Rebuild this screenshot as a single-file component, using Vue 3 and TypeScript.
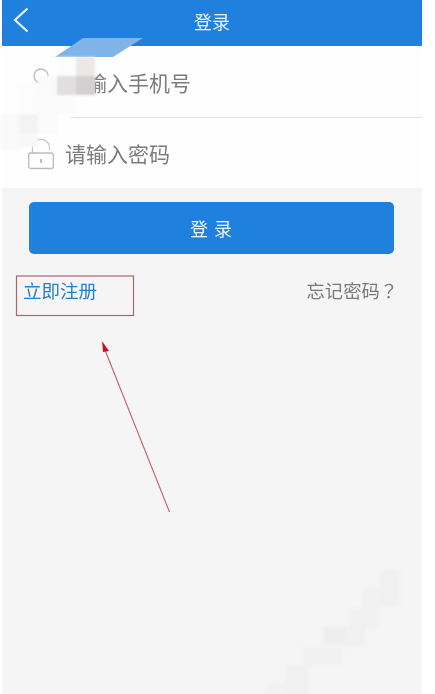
<script setup lang="ts">
interface Cell { x: number; y: number; w: number; h: number; fill: string }
const topCells: Cell[] = [
  { x: 38, y: 76, w: 19, h: 19, fill: '#fafafa' },
  { x: 19, y: 85, w: 19, h: 28, fill: '#fcfcfc' },
  { x: 38, y: 95, w: 38, h: 19, fill: '#fbfbfb' },
  { x: 0, y: 114, w: 19, h: 36, fill: '#f9f9f9' },
  { x: 19, y: 114, w: 19, h: 19, fill: '#f3f3f3' },
  { x: 19, y: 133, w: 19, h: 14, fill: '#f8f8f8' },
  { x: 38, y: 114, w: 19, h: 19, fill: '#fbfbfb' },
  { x: 57, y: 57, w: 19, h: 19, fill: '#fcfcfc' },
  { x: 76, y: 57, w: 19, h: 19, fill: '#ebe8e8' },
  { x: 57, y: 76, w: 19, h: 19, fill: '#e0dede' },
  { x: 76, y: 76, w: 19, h: 19, fill: '#d2d0d0' }
]
const bottomCells: Cell[] = [
  { x: 380, y: 570, w: 20, h: 36, fill: '#f0f0f0' },
  { x: 362, y: 588, w: 20, h: 20, fill: '#f1f1f1' },
  { x: 349, y: 608, w: 30, h: 20, fill: '#f1f1f1' },
  { x: 343, y: 625, w: 22, h: 22, fill: '#f0f0f0' },
  { x: 323, y: 627, w: 22, h: 18, fill: '#eeeeee' },
  { x: 303, y: 646, w: 40, h: 20, fill: '#f1f1f1' },
  { x: 286, y: 665, w: 22, h: 29, fill: '#f0f0f0' },
  { x: 266, y: 684, w: 20, h: 10, fill: '#f1f1f1' }
]
</script>

<template>
  <div class="page">
    <div class="screen">
      <header class="nav">
        <svg class="back" viewBox="0 0 16 26" width="16" height="26" aria-hidden="true">
          <path d="M14.5 1.5 L2 13 L14.5 24.5" fill="none" stroke="#e6f2fc" stroke-width="2.2" />
        </svg>
        <span class="nav-title">登录</span>
      </header>

      <section class="form">
        <div class="row row-first">
          <svg class="row-icon" viewBox="0 0 26 32" width="26" height="32" aria-hidden="true">
            <circle cx="13" cy="9" r="7" fill="none" stroke="#bcbcbc" stroke-width="1.3" />
            <path d="M1 31 C2 21 24 21 25 31 Z" fill="none" stroke="#bcbcbc" stroke-width="1.3" />
          </svg>
          <span class="placeholder">请输入手机号</span>
        </div>
        <div class="row">
          <svg class="row-icon" viewBox="0 0 26 32" width="26" height="32" aria-hidden="true">
            <path d="M4.5 15 V10 C4.5 -1.5 21.5 -1.5 21.5 10 V12" fill="none" stroke="#c4c4c4" stroke-width="1.2" />
            <rect x="0.7" y="15" width="24.6" height="15.5" rx="2" fill="none" stroke="#bcbcbc" stroke-width="1.3" />
            <rect x="12.2" y="21" width="1.6" height="4" fill="#b0b0b0" />
          </svg>
          <span class="placeholder">请输入密码</span>
        </div>
      </section>

      <button class="login" type="button">登 录</button>

      <div class="links">
        <a class="register">立即注册</a>
        <a class="forgot">忘记密码？</a>
      </div>
    </div>

    <svg class="overlay" viewBox="0 0 435 694" width="435" height="694" aria-hidden="true">
      <polygon points="55,57 83,38 143,38 113,57" fill="#80b4e9" />
      <g class="mosaic-top">
        <rect v-for="(c, i) in topCells" :key="'t' + i" :x="c.x" :y="c.y" :width="c.w" :height="c.h" :fill="c.fill" />
      </g>
      <g class="mosaic-bottom">
        <rect v-for="(c, i) in bottomCells" :key="'b' + i" :x="c.x" :y="c.y" :width="c.w" :height="c.h" :fill="c.fill" />
      </g>
      <rect x="16.5" y="276" width="117" height="39.5" fill="none" stroke="#a8656b" stroke-width="1.2" />
      <line x1="169.5" y1="512" x2="105" y2="350" stroke="#c0606c" stroke-width="1.1" />
      <polygon points="102,341 109,351 103,352" fill="#d01025" />
    </svg>
  </div>
</template>

<style>
html, body { margin: 0; background: #ffffff; }
</style>

<style scoped>
.page {
  position: relative;
  width: 435px;
  height: 694px;
  overflow: hidden;
  box-sizing: border-box;
  padding: 0 13px 0 2px;
  background: #ffffff;
  font-family: "Noto Sans CJK SC", "Noto Sans", sans-serif;
}
.screen {
  display: flex;
  flex-direction: column;
  height: 100%;
  background: #f6f5f5;
  filter: blur(0.35px);
}
.nav {
  position: relative;
  flex: none;
  height: 46px;
  display: flex;
  justify-content: center;
  background: #1f80dd;
}
.back {
  position: absolute;
  left: 11px;
  top: 7px;
}
.nav-title {
  color: #e9f3fc;
  font-size: 18px;
  line-height: 42px;
}
.form {
  flex: none;
  background: #fefefe;
  height: 142px;
  display: flex;
  flex-direction: column;
}
.row {
  flex: 1;
  display: flex;
  align-items: center;
  gap: 11px;
  padding-left: 26px;
}
.row-first {
  flex: none;
  height: 72px;
  position: relative;
}
.row-first::after {
  content: "";
  position: absolute;
  left: 68px;
  right: 0;
  bottom: 0;
  height: 1px;
  background: #e2e2e4;
}
.row-icon {
  flex: none;
  margin-top: 2px;
}
.placeholder {
  font-size: 21px;
  color: #7c7c7c;
  line-height: 30px;
}
.login {
  flex: none;
  align-self: flex-start;
  margin: 14px 0 0 27px;
  width: 365px;
  height: 52px;
  border: none;
  border-radius: 5px;
  background: #1f80dd;
  color: #e9f3fc;
  font-family: inherit;
  font-size: 18px;
  letter-spacing: 1px;
  padding: 0;
}
.links {
  flex: none;
  display: flex;
  justify-content: space-between;
  align-items: center;
  margin-top: 21px;
  padding: 0 24px 0 21px;
  height: 30px;
}
.register {
  color: #2a80c6;
  font-size: 18.5px;
}
.forgot {
  color: #7a7a7a;
  font-size: 18.3px;
  font-family: "Noto Sans CJK TC", "Noto Sans", sans-serif;
}
.overlay {
  position: absolute;
  left: 0;
  top: 0;
  pointer-events: none;
}
.mosaic-top {
  filter: blur(1px);
}
.mosaic-bottom {
  filter: blur(1.2px);
}
</style>
